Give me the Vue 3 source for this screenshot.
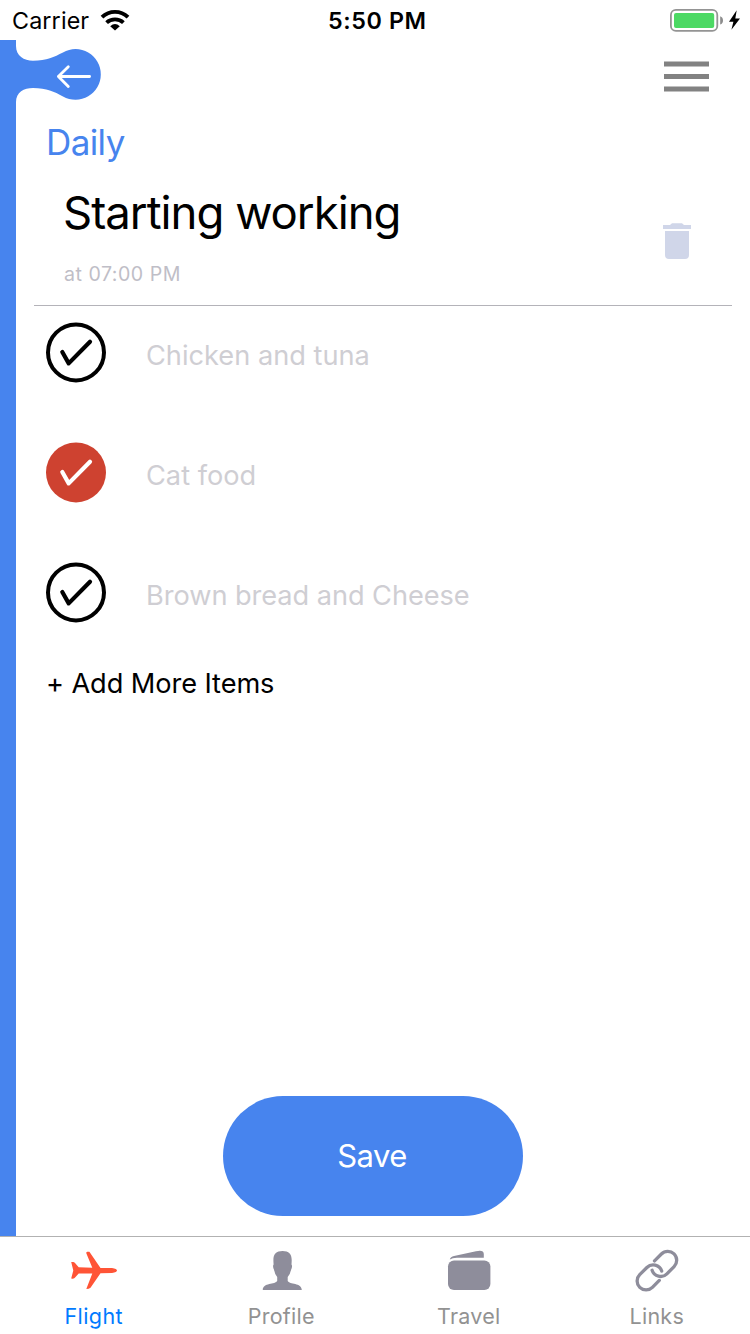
<script setup>
const items = [
  { label: 'Chicken and tuna', done: false, cls: 'chicken' },
  { label: 'Cat food', done: true, cls: 'cat' },
  { label: 'Brown bread and Cheese', done: false, cls: 'bread' },
]
const tabs = ['Flight', 'Profile', 'Travel', 'Links']
</script>

<template>
  <div class="screen">
    <header class="status">
      <div class="carrier">
        <span class="carrier-name">Carrier</span>
        <svg class="wifi" width="30" height="22" viewBox="0 0 30 22">
          <g fill="none" stroke="#000" stroke-width="3.9">
            <path d="M2 8.2Q7.5 2.9 15 2.9T28 8.2" />
            <path d="M6.6 13.6Q10 10.4 15 10.4T23.4 13.6" />
          </g>
          <path d="M10.2 17.2Q15 12.9 19.8 17.2L15 21.5Z" />
        </svg>
      </div>
      <span class="time">5:50 PM</span>
      <svg class="battery" width="72" height="24" viewBox="0 0 72 24">
        <rect x="0.9" y="1.9" width="46.4" height="21" rx="5" fill="#fff" stroke="#949494" stroke-width="1.8" />
        <rect x="4" y="5" width="40.2" height="15" rx="2" fill="#4cd964" />
        <path d="M50.2 8.2Q53 9.3 53 12.4T50.2 16.6Z" fill="#8c8c8c" />
        <path d="M66.7 2.2L59 13.7H63.4L61.4 21.8L70 10.4H65.3Z" />
      </svg>
    </header>

    <div class="body">
      <div class="rail"></div>
      <svg class="blob" width="104" height="66" viewBox="0 40 104 66">
        <path fill="#4784ee" d="M15 42H16V46C16 56 24 60.6 33 60.7C47 60.7 54 56.8 63 52.4A25.3 25.3 0 1 1 63 96.4C54 91.5 47 87.9 33 87.9C24 88 16 92 16 102H15Z" />
        <path d="M89.6 76.5H58.4M68.3 66.8L58.4 76.5L68.3 86.6" fill="none" stroke="#fff" stroke-width="2.8" stroke-linecap="round" stroke-linejoin="round" />
      </svg>

      <main class="content">
        <div class="toolbar">
          <svg class="menu" width="46" height="32" viewBox="0 0 46 32">
            <path d="M0 .5H45V5.5H0ZM0 13H45V18H0ZM0 25.5H45V30.5H0Z" fill="#828282" />
          </svg>
        </div>
        <div class="category"><span>Daily</span></div>
        <section class="heading">
          <div>
            <h1>Starting working</h1>
            <p>at 07:00 PM</p>
          </div>
          <svg class="trash" width="28" height="37" viewBox="0 0 28 37">
            <path d="M0 2H7L9 .3H19L21 2H28V6H0ZM2 8H26V32Q26 36 22 36H6Q2 36 2 32Z" fill="#d0d6e9" />
          </svg>
        </section>

        <ul class="items">
          <li v-for="item in items" :key="item.label">
            <svg width="60" height="61" viewBox="0 -0.4 60 61">
              <circle cx="30" cy="30" :r="item.done ? 30 : 28" :fill="item.done ? '#ce4230' : '#fff'" :stroke="item.done ? 'none' : '#000'" stroke-width="4" />
              <path d="M16.3 29.6L22.7 41L44 19.3" fill="none" :stroke="item.done ? '#fff' : '#000'" stroke-width="4.2" stroke-linecap="round" stroke-linejoin="round" />
            </svg>
            <span :class="item.cls">{{ item.label }}</span>
          </li>
        </ul>
        <div class="add"><span>+ Add More Items</span></div>
        <button class="save"><span>Save</span></button>
      </main>
    </div>

    <nav class="tabs">
      <div v-for="(tab, i) in tabs" :key="tab" class="tab" :class="{ active: i === 0 }">
        <svg v-if="i === 0" width="48" height="44" viewBox="0 0 48 44">
          <path d="M1.2 14H3.2Q4.2 14 5 15L8.7 19.3L22.3 19.7L16.4 5.5Q16 4 17.3 3.8H19.4L30.5 19.9L42 20Q47 20.7 47 22.5T42 25L30.5 25.3L20.5 39.8Q19 41 16.3 41L22.3 25.5L8.7 25.6L4.6 30Q3.5 31 1.2 30.6L3.3 22.5Z" fill="#ff5436" />
        </svg>
        <svg v-else-if="i === 1" width="48" height="44" viewBox="-0.8 0 48 44">
          <path d="M24.8 3C31 3 33.9 6 33.9 12Q33.9 14.5 33.7 16.6Q35 18.2 33.2 22Q32.6 25.5 29.9 29V33C31.5 36.6 44 34.6 44 42H5C5 34.6 17.5 36.6 19.4 33V29Q16.8 25.5 16.3 22Q14.5 18.2 15.8 16.6Q15.6 14.5 15.6 12C15.6 6 18.5 3 24.8 3Z" fill="#8e8d9b" />
        </svg>
        <svg v-else-if="i === 2" width="48" height="44" viewBox="0 0 48 44">
          <rect x="3" y="12.6" width="42.4" height="29.4" rx="6" fill="#8e8d9b" />
          <path d="M4.8 11.6Q5.5 8.7 9 8L31 3.3Q38.6 1.4 38.8 6V9.8H12Q7.3 10 4.8 11.6Z" fill="#8e8d9b" />
        </svg>
        <svg v-else width="48" height="44" viewBox="-0.9 0 48 44">
          <g fill="none" stroke="#8e8d9b" stroke-width="3.3" stroke-linecap="round">
            <path d="M21.6 12.9L28.5 6A8.9 8.9 0 0 1 41.2 18.6L34 25.8A8.9 8.9 0 0 1 19.2 22.2" />
            <path d="M26.4 32.4L19.5 39.3A8.9 8.9 0 0 1 6.8 26.7L14 19.5A8.9 8.9 0 0 1 28.8 23.1" />
          </g>
        </svg>
        <span :class="tab.toLowerCase()">{{ tab }}</span>
      </div>
    </nav>
  </div>
</template>

<style>
body {
  background: #fff;
}
</style>

<style scoped>
.screen {
  width: 750px;
  height: 1334px;
  display: flex;
  flex-direction: column;
  background: #fff;
  color: #000;
  font-family: Inter, "Liberation Sans", sans-serif;
  overflow: hidden;
}
span, h1, p {
  white-space: nowrap;
}
.status {
  height: 40px;
  display: grid;
  grid-template-columns: 328px 1fr 80px;
  align-items: center;
  font-size: 23.3px;
  line-height: 40px;
}
.carrier {
  display: flex;
  align-items: center;
  gap: 11px;
  padding-left: 12px;
}
.carrier-name {
  padding-top: 2px;
  line-height: 38px;
  letter-spacing: 0.13px;
}
.time {
  padding-top: 2px;
  line-height: 38px;
  font-weight: 600;
  letter-spacing: 0.6px;
}
.body {
  position: relative;
  height: 1196px;
  display: flex;
}
.rail {
  width: 16px;
  background: #4784ee;
}
.blob {
  position: absolute;
  left: 0;
  top: 0;
}
.content {
  flex: 1;
  display: flex;
  flex-direction: column;
}
.toolbar {
  height: 78px;
  display: flex;
  justify-content: flex-end;
  padding: 21px 40px 0 0;
  box-sizing: border-box;
}
.category {
  height: 50px;
  padding-left: 30px;
  font-size: 35px;
  letter-spacing: -0.6px;
  line-height: 48px;
  color: #4784ee;
}
.heading {
  height: 138px;
  margin: 0 18px 0 18px;
  padding: 10px 41px 0 30px;
  box-sizing: border-box;
  display: flex;
  justify-content: space-between;
  border-bottom: 1px solid #b4b3b9;
}
.heading h1 {
  margin: 0;
  margin-left: -1px;
  font-size: 45.5px;
  font-weight: 400;
  letter-spacing: -1px;
  line-height: 70px;
}
.heading p {
  margin: 11px 0 0;
  font-size: 19.6px;
  letter-spacing: 0.5px;
  line-height: 30px;
  color: #bfbec7;
}
.trash {
  margin-top: 45px;
}
.items {
  margin: 0;
  padding: 16px 0 0 30px;
  list-style: none;
}
.items li {
  height: 120px;
  display: flex;
  gap: 40px;
  font-size: 27.2px;
  color: #cfced3;
}
.items span {
  line-height: 68px;
}
.items .bread {
  letter-spacing: -0.06px;
}
.add {
  padding-left: 30px;
  margin-top: -22px;
  height: 48px;
  line-height: 48px;
  font-size: 27.2px;
  letter-spacing: -0.09px;
}
.save {
  width: 300px;
  height: 120px;
  margin: auto 0 20px 207px;
  padding: 0 2px 2px 0;
  border: 0;
  border-radius: 60px;
  background: #4784ee;
  color: #fff;
  font-family: inherit;
  font-size: 31px;
  font-weight: 400;
  letter-spacing: -0.5px;
}
.tabs {
  height: 98px;
  box-sizing: border-box;
  border-top: 1px solid #b2b2b2;
  display: grid;
  grid-template-columns: repeat(4, 1fr);
}
.tab {
  display: flex;
  flex-direction: column;
  align-items: center;
  padding-top: 11px;
  font-size: 21.5px;
  letter-spacing: 0.25px;
  line-height: 30px;
  color: #929292;
}
.tab span {
  margin-top: 9px;
}
.tab .flight {
  letter-spacing: 0.4px;
}
.tab .links {
  padding-left: 1px;
}
.tab.active {
  color: #007aff;
}
</style>
